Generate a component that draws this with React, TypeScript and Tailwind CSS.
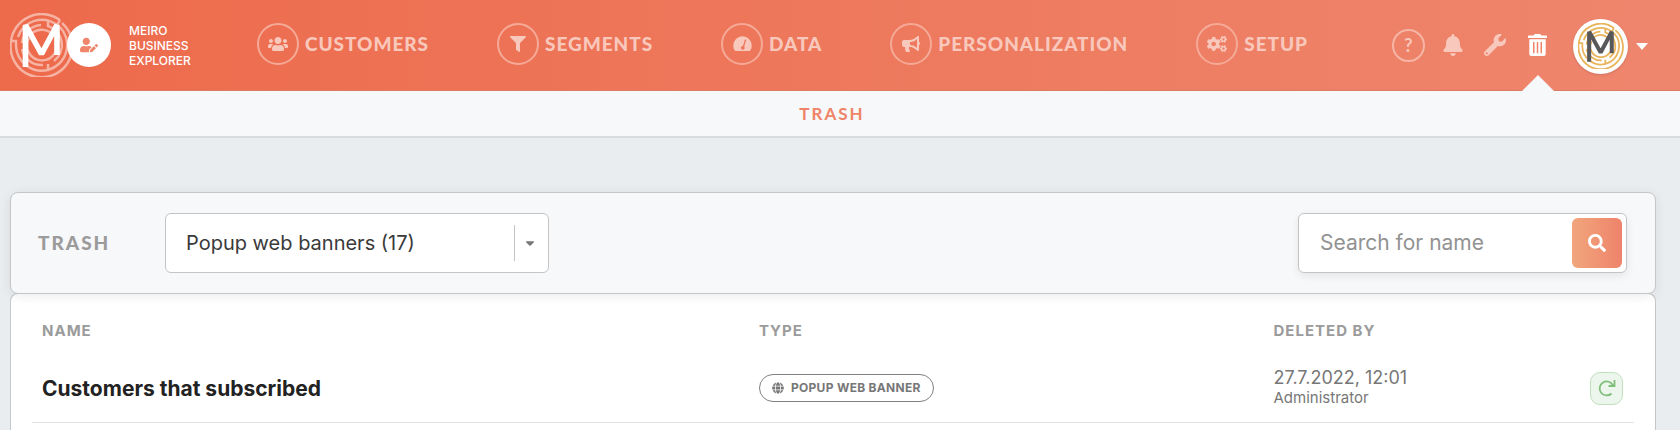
import React from 'react'
import { FaBell, FaBullhorn, FaCaretDown, FaCogs, FaFilter, FaGlobe, FaSearch, FaUserEdit, FaUsers, FaWrench } from 'react-icons/fa'

type NavItem = { label: string, icon: React.ReactNode }
type TrashRow = { name: string, type: string, deletedAt: string, deletedBy: string }

function GaugeIcon() {
  return (
    <svg viewBox="0 0 19 16" className="h-4 w-[19px]" aria-hidden="true">
      <path d="M.3 9.500a9.200 9.200 0 0 1 18.400 0c0 1.800-.4 3.200-1.100 4.600-.3.600-.7.900-1.400.900H2.800c-.7 0-1.100-.3-1.400-.9C.7 12.700.3 11.300.3 9.500Z" fill="currentColor" />
      <path d="M12.500 4 10.300 11" stroke="#ee775b" strokeWidth="1.300" strokeLinecap="round" />
      <circle cx="9.800" cy="11.800" r="1.900" fill="#ee775b" />
    </svg>
  )
}

function TrashIcon() {
  return (
    <svg viewBox="0 0 19 22" className="h-[22px] w-[19px]" fill="currentColor" fillRule="evenodd" aria-hidden="true">
      <path d="M.6 1.600H5.500L6.600.3Q6.800 0 7.200 0H11.800Q12.200 0 12.400.3L13.500 1.600H18.400Q19 1.600 19 2.200V4.100H0V2.200Q0 1.600.6 1.600Z" />
      <path d="M1.300 5.200H17.700V20Q17.700 22 15.700 22H3.300Q1.300 22 1.300 20ZM5 8V19.200H6.500V8ZM8.750 8V19.200H10.250V8ZM12.500 8V19.200H14V8Z" />
    </svg>
  )
}

const navItems: NavItem[] = [
  { label: 'Customers', icon: <FaUsers className="size-5" /> },
  { label: 'Segments', icon: <FaFilter className="size-4" /> },
  { label: 'Data', icon: <GaugeIcon /> },
  { label: 'Personalization', icon: <FaBullhorn className="size-[18px]" /> },
  { label: 'Setup', icon: <FaCogs className="size-5" /> },
]

const rows: TrashRow[] = [
  { name: 'Customers that subscribed', type: 'Popup web banner', deletedAt: '27.7.2022, 12:01', deletedBy: 'Administrator' },
]

// Labyrinth rings with the M on top, shared by the logo and the avatar
function Maze({ ring, letter, className }: { ring: string, letter: string, className: string }) {
  return (
    <svg viewBox="0 0 64 64" fill="none" className={className} aria-hidden="true">
      <g stroke={ring} strokeWidth="2.500">
        <path d="M50 7A31 31 0 0 0 1 28H6V33A26 26 0 0 0 38 57V51" />
        <path d="M1 28A31 31 0 0 0 57 51" />
        <path d="M52 10A31 31 0 0 1 57 51" />
        <path d="M50 7L47 12A25 25 0 0 0 8 24" />
        <path d="M38 57A26 26 0 0 0 50 14" />
        <path d="M31 12A20 20 0 0 0 12 30" />
        <path d="M12 36A20 20 0 0 0 33 52" />
        <path d="M38 7V13A20 20 0 0 1 44 48" />
        <path d="M22 20A15 15 0 0 1 42 21" />
        <path d="M19 25A15 15 0 1 0 45 25" />
      </g>
      <path d="M15.500 54V12L31.500 41L47 12V42" stroke={letter} strokeWidth="5.600" strokeLinejoin="bevel" />
    </svg>
  )
}

function Header() {
  return (
    <header className="flex h-[91px] items-center border-b border-[#dc7a62] bg-linear-to-r from-[#ed6a4b] to-[#ee866d] pr-8 pl-[10px]">
      <a href="#" className="flex items-center text-white">
        <Maze ring="#f6b2a2" letter="#ffffff" className="size-16" />
        <span className="-ml-[7px] flex size-11 items-center justify-center rounded-full bg-white text-[#ef856b]">
          <FaUserEdit className="size-[18px]" />
        </span>
        <span className="ml-[18px] w-[128px] text-xs leading-[15px] font-medium uppercase">Meiro<br />Business<br />Explorer</span>
      </a>
      <nav className="flex gap-[68px] pb-[2px]">
        {navItems.map(item => (
          <a key={item.label} href="#" className="flex items-center gap-[6px] text-[#f9c8bc]">
            <span className="flex size-[42px] items-center justify-center rounded-full border-2 border-[#f5a997]">{item.icon}</span>
            <span className="font-['Lato'] text-[19px] font-black tracking-wider uppercase">{item.label}</span>
          </a>
        ))}
      </nav>
      <div className="ml-auto flex items-center text-[#f9c8bc]">
        <button aria-label="Help" className="flex size-[33px] items-center justify-center rounded-full border-2 border-[#f6b5a6] font-['Lato'] text-lg font-bold">?</button>
        <button aria-label="Notifications" className="ml-[17px]"><FaBell className="size-[22px]" /></button>
        <button aria-label="Tools" className="ml-5"><FaWrench className="size-[22px]" /></button>
        <button aria-label="Trash" className="relative ml-[22px] text-white">
          <TrashIcon />
          <span className="absolute top-[41px] left-1/2 -translate-x-1/2 border-x-16 border-b-16 border-x-transparent border-b-[#f7f8fa]" />
        </button>
        <button aria-label="Account" className="ml-[26px] flex items-center gap-2 pt-[2px] text-white">
          <span className="flex size-[55px] items-center justify-center rounded-full bg-white shadow-sm">
            <Maze ring="#e9b45c" letter="#58585a" className="size-[46px]" />
          </span>
          <svg viewBox="0 0 12 7" className="h-[7px] w-3" fill="currentColor"><path d="M0 0H12L6 7Z" /></svg>
        </button>
      </div>
    </header>
  )
}

function Toolbar() {
  return (
    <div className="relative flex h-[102px] items-center rounded-lg border border-[#c4c6c8] bg-[#f7f8fa] pr-7 pl-[27px] shadow-[0_2px_12px_rgba(0,0,0,0.08)]">
      <h1 className="w-[127px] font-['Lato'] text-[19px] font-black tracking-[2px] text-[#9b9b9b] uppercase">Trash</h1>
      <div className="relative flex h-[60px] w-96 items-center rounded-md border border-[#c4c4c4] bg-white">
        <select aria-label="Type of item" className="h-full w-full appearance-none bg-transparent px-5 text-xl text-[#3a3a3a]">
          <option>Popup web banners (17)</option>
        </select>
        <span className="pointer-events-none absolute right-0 flex h-9 w-[34px] items-center justify-center border-l border-[#c4c4c4] pr-1 text-[#777777]">
          <FaCaretDown className="size-[14px]" />
        </span>
      </div>
      <form className="ml-auto flex h-[60px] w-[329px] items-center rounded-md border border-[#c4c4c4] bg-white pr-1 shadow-[0_3px_8px_rgba(0,0,0,0.08)]">
        <input aria-label="Search for name" placeholder="Search for name" className="w-full min-w-0 pl-[21px] text-[21px] placeholder:text-[#929292]" />
        <button type="button" aria-label="Search" className="flex size-[50px] shrink-0 items-center justify-center rounded-md bg-linear-to-r from-[#f1a67c] to-[#ee836b] text-white">
          <FaSearch className="size-[18px]" />
        </button>
      </form>
    </div>
  )
}

function TrashTable() {
  return (
    <div className="-mt-px flex-1 rounded-t-lg border border-b-0 border-[#c4c6c8] bg-white px-[21px] pt-[10px]">
      <table className="w-full table-fixed text-left">
        <thead>
          <tr className="h-[54px] text-[15px] tracking-[1px] text-[#9b9b9b] uppercase">
            <th className="w-[45%] pl-[10px] font-bold">Name</th>
            <th className="w-[32%] pl-[6px] font-bold">Type</th>
            <th className="pl-2 font-bold">Deleted by</th>
            <th className="w-16" aria-label="Actions" />
          </tr>
        </thead>
        <tbody>
          {rows.map(r => (
            <tr key={r.name} className="h-16 border-b border-[#e3e3e3]">
              <td className="pb-[3px] pl-[10px] text-[21px] font-bold text-[#222222]">{r.name}</td>
              <td className="pb-[3px] pl-[6px]">
                <span className="inline-flex h-7 items-center gap-[7px] rounded-full border border-[#808080] px-3 text-xs font-bold tracking-wide text-[#777777] uppercase">
                  <FaGlobe className="size-3" />{r.type}
                </span>
              </td>
              <td className="pb-[3px] pl-2 text-[#777777]">
                <div className="text-lg leading-5">{r.deletedAt}</div>
                <div className="text-[15px] leading-5">{r.deletedBy}</div>
              </td>
              <td className="pb-[3px]">
                <button aria-label="Restore" className="mr-[11px] ml-auto flex size-[33px] items-center justify-center rounded-[10px] border border-[#bfe0bd] bg-[#edf6ed] text-[#7fbf7b]">
                  <svg viewBox="0 0 18 18" className="size-[18px]" fill="none" stroke="currentColor" strokeWidth="1.800">
                    <path d="M13.500 14.500A7 7 0 1 1 15 6.500M16.500 1V7H10.500" />
                  </svg>
                </button>
              </td>
            </tr>
          ))}
        </tbody>
      </table>
    </div>
  )
}

export default function App() {
  return (
    <div className="flex min-h-screen flex-col bg-[#e9edf0] font-['Inter',sans-serif]">
      <Header />
      <div className="flex h-[47px] items-center justify-center border-b-2 border-[#d9dcdf] bg-[#f7f8fa] pr-4">
        <a href="#" className="font-['Lato'] text-[17px] font-bold tracking-[2px] text-[#ef8468] uppercase">Trash</a>
      </div>
      <main className="flex flex-1 flex-col pt-[54px] pr-6 pl-[10px]">
        <Toolbar />
        <TrashTable />
      </main>
    </div>
  )
}
